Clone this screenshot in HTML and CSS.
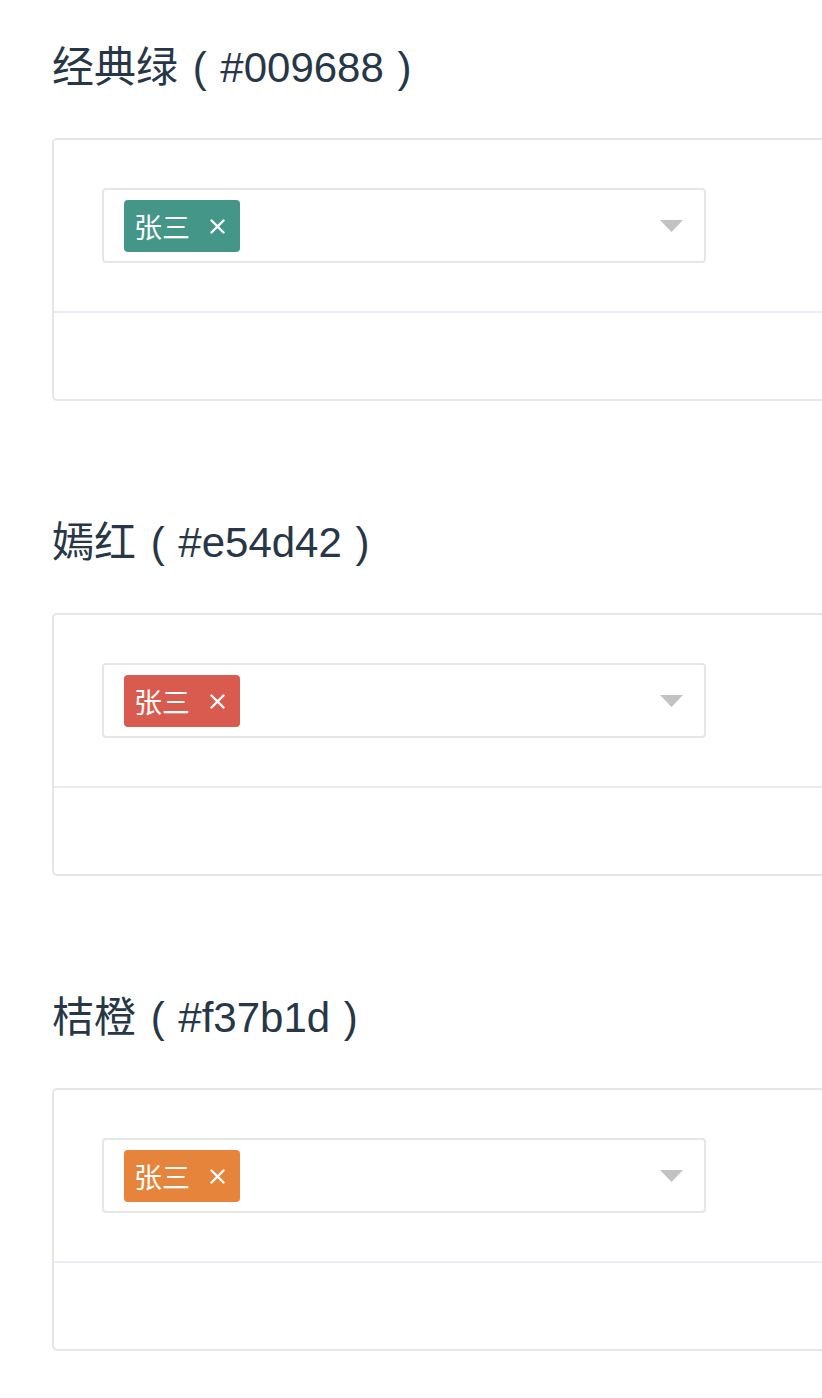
FILE: index.html
```html
<!DOCTYPE html>
<html lang="zh-CN">
<head>
<meta charset="utf-8">
<title>Tag colors</title>
<link rel="stylesheet" href="styles.css">
</head>
<body>
<div class="page">
  <section class="demo">
    <h2 class="demo-title">经典绿 <span class="hex">( #009688 )</span></h2>
    <div class="card">
      <div class="card-body">
        <div class="select">
          <span class="tag tag-green">张三<svg class="tag-close" viewBox="0 0 15 15" width="15" height="15"><path d="M1.5 1.5 L13.5 13.5 M13.5 1.5 L1.5 13.5" stroke="#fff" stroke-width="2.4" stroke-linecap="round"/></svg></span>
          <svg class="arrow" viewBox="0 0 23 12" width="23" height="12"><path d="M0 0 L23 0 L11.5 12 Z" fill="#c2c2c2"/></svg>
        </div>
      </div>
      <div class="card-foot"></div>
    </div>
  </section>

  <section class="demo">
    <h2 class="demo-title">嫣红 <span class="hex">( #e54d42 )</span></h2>
    <div class="card">
      <div class="card-body">
        <div class="select">
          <span class="tag tag-red">张三<svg class="tag-close" viewBox="0 0 15 15" width="15" height="15"><path d="M1.5 1.5 L13.5 13.5 M13.5 1.5 L1.5 13.5" stroke="#fff" stroke-width="2.4" stroke-linecap="round"/></svg></span>
          <svg class="arrow" viewBox="0 0 23 12" width="23" height="12"><path d="M0 0 L23 0 L11.5 12 Z" fill="#c2c2c2"/></svg>
        </div>
      </div>
      <div class="card-foot"></div>
    </div>
  </section>

  <section class="demo">
    <h2 class="demo-title">桔橙 <span class="hex">( #f37b1d )</span></h2>
    <div class="card">
      <div class="card-body">
        <div class="select">
          <span class="tag tag-orange">张三<svg class="tag-close" viewBox="0 0 15 15" width="15" height="15"><path d="M1.5 1.5 L13.5 13.5 M13.5 1.5 L1.5 13.5" stroke="#fff" stroke-width="2.4" stroke-linecap="round"/></svg></span>
          <svg class="arrow" viewBox="0 0 23 12" width="23" height="12"><path d="M0 0 L23 0 L11.5 12 Z" fill="#c2c2c2"/></svg>
        </div>
      </div>
      <div class="card-foot"></div>
    </div>
  </section>
</div>
</body>
</html>
```

FILE: styles.css
```css
html, body {
  margin: 0;
  padding: 0;
  background: #fff;
  overflow-x: hidden;
}

body {
  font-family: "Liberation Sans", Arial, "Noto Sans CJK SC", sans-serif;
  color: #283747;
}

.page {
  padding: 36px 0 40px 52px;
}

.demo + .demo {
  margin-top: 110px;
}

.demo-title {
  margin: 0 0 39px;
  font-size: 42px;
  line-height: 63px;
  font-weight: normal;
  color: #283747;
}

.hex {
  font-family: "Liberation Sans", Arial, sans-serif;
  margin-left: 3px;
  word-spacing: 2px;
}

.card {
  margin-right: -20px;
  border: 2px solid #e6e6e6;
  border-radius: 5px;
  background: #fff;
}

.card-body {
  padding: 48px;
  border-bottom: 2px solid #ececf7;
}

.card-foot {
  height: 86px;
}

.select {
  box-sizing: border-box;
  width: 604px;
  height: 75px;
  border: 2px solid #e6e6e6;
  border-radius: 4px;
  padding: 0 21px 0 20px;
  display: flex;
  align-items: center;
  justify-content: space-between;
}

.tag {
  display: inline-flex;
  align-items: center;
  height: 52px;
  padding: 0 15px 0 10px;
  border-radius: 4px;
  color: #fff;
  font-family: "Noto Sans CJK SC", sans-serif;
  font-size: 28px;
  line-height: 52px;
}

.tag-close {
  display: block;
  margin-left: 20px;
  margin-top: 2px;
}

.tag-green { background: #449688; }
.tag-red { background: #d95a4e; }
.tag-orange { background: #e5843a; }

.arrow {
  display: block;
}
```
